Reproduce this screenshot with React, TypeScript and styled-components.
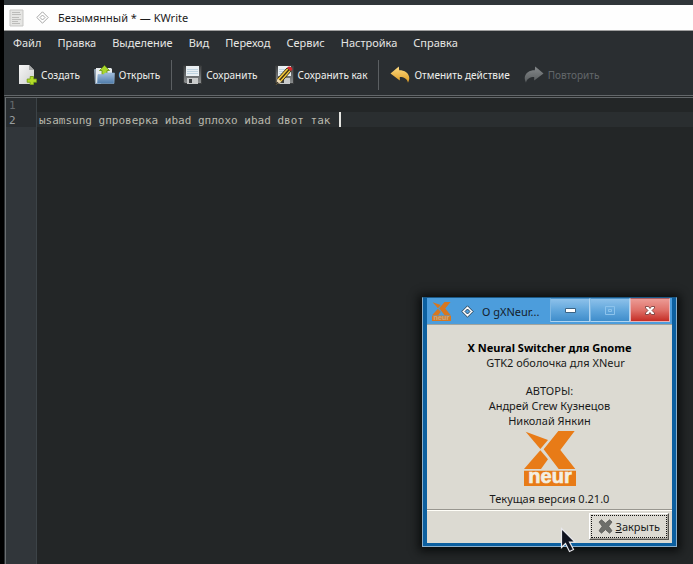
import React, { useState } from "react";
import styled, { createGlobalStyle, css } from "styled-components";

const GlobalStyle = createGlobalStyle`
  *, *::before, *::after { box-sizing: border-box; }
  body {
    margin: 0;
    background: #000;
    font-family: "Noto Sans", sans-serif;
    font-size: 11px;
  }
  button, textarea { font: inherit; color: inherit; }
`;

const Desktop = styled.div`
  position: relative;
  display: flex;
  min-height: 100vh;
  padding: 0 0 0 4px;
  overflow: hidden;
  background: #000;
`;

const AppWindow = styled.main`
  flex: 1;
  min-width: 0;
  display: flex;
  flex-direction: column;
  border-top: 5px solid #30363a;
  background: #2a2e31;
`;

const TitleBar = styled.header`
  display: flex;
  align-items: center;
  height: 26px;
  padding-left: 5px;
  background: #fefefe;
  border-bottom: 1px solid #a0a0a0;
`;

const PinIcon = styled.svg`
  margin: 0 9px 0 12px;
`;

const WindowTitle = styled.h1`
  margin: 0;
  font-size: 11px;
  font-weight: 400;
  color: #1c1c1c;
`;

const MenuBar = styled.nav`
  display: flex;
  gap: 16px;
  height: 22px;
  padding: 0 9px;
`;

const MenuItem = styled.button`
  padding: 0;
  border: 0;
  background: none;
  color: #e6e6e4;
  white-space: nowrap;
`;

const ToolBar = styled.div`
  display: flex;
  align-items: center;
  height: 42px;
  padding: 2px 14px 0;
  font-size: 10px;
  white-space: nowrap;
`;

const ToolButton = styled.button<{ $gap?: number }>`
  display: flex;
  align-items: center;
  gap: 4px;
  margin-right: ${(p) => p.$gap ?? 0}px;
  padding: 0;
  border: 0;
  background: none;
  color: #eeeeec;

  &:disabled { color: #62676a; }
  svg { flex: none; }
`;

const Separator = styled.div`
  width: 1px;
  height: 30px;
  margin-right: 11px;
  background: #5b5f62;
`;

const Editor = styled.section`
  flex: 1;
  display: flex;
  border-top: 3px double #63676a;
  border-left: 1px solid #2a2e31;
  font-family: "DejaVu Sans Mono", monospace;
  font-size: 11px;
  line-height: 15px;
  background: #232627;
`;

const Gutter = styled.div`
  width: 32px;
  padding-left: 3px;
  border-left: 1px solid #6a6e70;
  border-right: 1px solid #3c4347;
  background: linear-gradient(#292d30 29px, #31363a 29px);
`;

const LineNumber = styled.div<{ $current?: boolean }>`
  color: ${(p) => (p.$current ? "#999d9f" : "#64696c")};
`;

const TextPane = styled.div`
  position: relative;
  flex: 1;
  display: flex;
  background: linear-gradient(#232627 14px, #2a2e30 14px, #2a2e30 29px, #232627 29px);
`;

const TextArea = styled.textarea`
  flex: 1;
  padding: 0 2px;
  border: 0;
  outline: 0;
  resize: none;
  background: none;
  color: #b9b8ac;
  line-height: 15px;
  white-space: pre;
  overflow: hidden;
`;

const Caret = styled.span<{ $column: number }>`
  position: absolute;
  top: 14px;
  left: calc(${(p) => p.$column}ch + 4px);
  width: 2px;
  height: 15px;
  background: #e4e4e0;
`;

const Dialog = styled.section`
  position: absolute;
  right: 16px;
  bottom: 17px;
  width: 255px;
  padding: 0 4px 3px;
  border: 1px solid #8aaecb;
  border-top-color: #1b5885;
  background: #0c5f9f;
  box-shadow: 0 1px 9px 3px #090b0b;
`;

const DialogTitleBar = styled.header`
  display: flex;
  align-items: center;
  height: 26px;
  padding: 0 2px 0 5px;
  background: #4c9ddc;
`;

const DialogPin = styled.svg`
  margin: 0 8px 0 10px;
`;

const DialogTitle = styled.h2`
  flex: 1;
  margin: 0;
  font-size: 11px;
  font-weight: 400;
  color: #14202b;
  white-space: nowrap;
`;

const WindowButton = styled.button<{ $close?: boolean }>`
  display: grid;
  place-items: center;
  align-self: flex-start;
  width: 40px;
  height: 24px;
  padding: 0;
  border: 1px solid #b0d4f0;
  border-top-color: #4d92c8;
  border-left: 1px solid #7fb8e3;
  background: linear-gradient(#8dc1ea, #62a7dc 50%, #3f8dcb);
  ${(p) =>
    p.$close &&
    css`
      border-color: #e4b3b8;
      border-top-color: #a95f64;
      background: linear-gradient(#ec9b95, #df7169 50%, #c52d25);
    `}
`;

const DialogBody = styled.div`
  display: flex;
  flex-direction: column;
  border-top: 1px solid #a1a49f;
  background: #dcdad2;
  color: #1a1a1a;
`;

const About = styled.div`
  display: flex;
  flex-direction: column;
  align-items: center;
  padding: 15px 0 3px;
  border-bottom: 1px solid #98968f;
  line-height: 15px;
  text-align: center;

  p { margin: 0; }
`;

const ProgramName = styled.p`
  font-weight: 700;
  color: #000;
`;

const Summary = styled.p`
  padding-left: 12px;
`;

const Authors = styled.div`
  margin: 13px 0 3px;
`;

const Version = styled.p`
  padding-top: 5px;
`;

const Actions = styled.div`
  display: flex;
  justify-content: flex-end;
  padding: 2px 3px 3px;
  border-top: 1px solid #fffef8;
`;

const CloseButton = styled.button`
  padding: 1px;
  border: 1px solid;
  border-color: #fff #55534e #55534e #fff;
  box-shadow: inset -1px -1px #a7a49c;
  background: #dcdad2;
`;

const FocusRing = styled.span`
  display: flex;
  align-items: center;
  gap: 3px;
  height: 23px;
  padding: 0 6px;
  border: 1px dotted #111;
  white-space: nowrap;
`;

const Pointer = styled.svg`
  position: absolute;
  right: 117px;
  bottom: 11px;
`;

function DiamondShape({ line, fill, hole }: { line: string; fill: string; hole: string }) {
  return (
    <g stroke={line}>
      <path d="M6.500.8 12.200 6.500 6.500 12.200.8 6.500Z" fill={fill} />
      <path d="M6.500 4 9 6.500 6.500 9 4 6.500Z" fill={hole} />
    </g>
  );
}

function DocumentIcon() {
  return (
    <svg width="15" height="18" viewBox="0 0 15 18" aria-hidden="true">
      <path d="M1 1h13v16H1Z" fill="#e6e6e4" stroke="#c7c7c5" />
      <path d="M3 3.500h8M3 5.500h9M3 8.500h7M3 10.500h9M3 12.500h6M3 14.500h8" stroke="#bdbdbb" />
    </svg>
  );
}

function NewIcon() {
  return (
    <svg width="19" height="20" viewBox="0 0 19 20" aria-hidden="true">
      <defs>
        <linearGradient id="paper" x2="1" y2="1">
          <stop stopColor="#f6f6f6" />
          <stop offset="1" stopColor="#cfd0d0" />
        </linearGradient>
      </defs>
      <path d="M1 0h10l5 5v14H1Z" fill="url(#paper)" />
      <path d="M11 0v5h5Z" fill="#a9abab" />
      <path d="M12.200 11.500h3.300v2.500h3v3.300h-3v2.500h-3.300v-2.500h-3V14h3Z" fill="#b4dc28" stroke="#6f9a10" strokeWidth=".8" />
    </svg>
  );
}

function OpenIcon() {
  return (
    <svg width="21" height="20" viewBox="0 0 21 20" aria-hidden="true">
      <defs>
        <linearGradient id="folder" x2="0" y2="1">
          <stop stopColor="#a3bedc" />
          <stop offset="1" stopColor="#4f7cab" />
        </linearGradient>
      </defs>
      <path d="M0 5q0-1 1-1h5l1 2v13H1Z" fill="#8fa0b0" />
      <path d="M2 3h15l1 1v6H4v8H2Z" fill="#e8ecee" />
      <path d="M10.500.5 15.500 5.500H13V10H8V5.500H5.500Z" fill="#a9d62c" stroke="#66900f" strokeWidth=".8" />
      <path d="M4 9.500h6l1-1.500h9.500l-.5 10.500H3Z" fill="url(#folder)" stroke="#8fb1d4" strokeWidth=".6" />
    </svg>
  );
}

function SaveIcon({ pencil = false }: { pencil?: boolean }) {
  return (
    <svg width="19" height="20" viewBox="0 0 19 20" aria-hidden="true">
      <defs>
        <linearGradient id="disk" x2="0" y2="1">
          <stop stopColor="#3e4143" />
          <stop offset=".5" stopColor="#66696a" />
          <stop offset="1" stopColor="#8c8f90" />
        </linearGradient>
      </defs>
      <path d="M.5 1h18v17.500H2L.5 17Z" fill="url(#disk)" stroke="#3a3c3d" />
      <path d="M3 1h13v10H3Z" fill="#e9eff2" />
      <path d="M4 4.500h11M4 6.500h11M4 8.500h11" stroke="#bfd3df" />
      <path d="M4 13h11v6H4Z" fill="#c9cbcb" />
      <path d="M6 14h3v4H6Z" fill="#3b3e40" />
      {pencil && (
        <g>
          <path d="m.8 19.400 1.800-6L12 3l4 3-9.500 11Z" fill="#f0c53a" stroke="#2e2610" strokeWidth=".9" />
          <path d="m4.600 15.300 9.600-10.800" stroke="#3a2f14" strokeWidth="1.300" />
          <path d="m12 3 1-1.200q2-1 3.600.8t.4 2.400L16 6Z" fill="#d8262c" />
          <path d="m.8 19.400 1.800-6 3.900 3.600Z" fill="#ecd9b4" />
          <path d="m.8 19.400.9-3 2 1.700Z" fill="#222" />
        </g>
      )}
    </svg>
  );
}

function ArrowIcon({ redo = false }: { redo?: boolean }) {
  const id = redo ? "redo" : "undo";
  return (
    <svg width="20" height="18" viewBox="0 0 20 18" aria-hidden="true">
      <defs>
        <linearGradient id={id} x2="0" y2="1">
          <stop stopColor={redo ? "#85898b" : "#ffdc84"} />
          <stop offset="1" stopColor={redo ? "#575b5d" : "#dc9a20"} />
        </linearGradient>
      </defs>
      <path
        transform={redo ? "matrix(-1 0 0 1 20 0)" : undefined}
        d="M.5 7.500 8.800.5 9.200 4.200C14.500 4.200 19 6.800 19.300 12q0 2.500-1.300 4.800C17.500 13 14 11 9.800 11V14.500Z"
        fill={`url(#${id})`}
      />
    </svg>
  );
}

function XNeurLogo({ width, height, color, lettering }: { width: number; height: number; color: string; lettering: string }) {
  return (
    <svg width={width} height={height} viewBox="0 0 156 165" preserveAspectRatio="none" role="img" aria-label="XNeur">
      <g fill={color}>
        <path d="M5 2 72 27 49 54Z" />
        <path d="M103 0h49l-43 57 45 57h-50L59 55Z" />
        <path d="m49 58 23 27-21 29H0Z" />
        <path d="M0 119h156v46H0Z" />
      </g>
      <text
        x="78"
        y="157"
        textAnchor="middle"
        fill={lettering}
        stroke={lettering}
        strokeWidth="2"
        fontFamily="Liberation Sans, sans-serif"
        fontWeight="700"
        fontSize="60"
      >
        neur
      </text>
    </svg>
  );
}

function CrossIcon() {
  return (
    <svg width="15" height="15" viewBox="0 0 15 15" aria-hidden="true">
      <path
        d="M1 3 3.500.8 7.500 4.200 11.500.8 14 3 10.700 7.300 14 11.800 11.500 14.200 7.500 10.600 3.500 14.200 1 11.800 4.200 7.300Z"
        fill="#6d6e6a"
        stroke="#5a5b58"
        strokeWidth=".8"
      />
    </svg>
  );
}

const menus = ["Файл", "Правка", "Выделение", "Вид", "Переход", "Сервис", "Настройка", "Справка"];
const initialText = "\nыsamsung gпроверка иbad gплохо иbad dвот так ";

export default function App() {
  const [text, setText] = useState(initialText);
  const lines = text.split("\n");

  return (
    <Desktop>
      <GlobalStyle />
      <AppWindow>
        <TitleBar>
          <DocumentIcon />
          <PinIcon width="13" height="13" viewBox="0 0 13 13" aria-hidden="true">
            <DiamondShape line="#a6a6a6" fill="#fff" hole="#fff" />
          </PinIcon>
          <WindowTitle>Безымянный * — KWrite</WindowTitle>
        </TitleBar>
        <MenuBar aria-label="Меню">
          {menus.map((name) => (
            <MenuItem key={name}>{name}</MenuItem>
          ))}
        </MenuBar>
        <ToolBar>
          <ToolButton $gap={14}><NewIcon />Создать</ToolButton>
          <ToolButton $gap={11}><OpenIcon />Открыть</ToolButton>
          <Separator />
          <ToolButton $gap={17}><SaveIcon />Сохранить</ToolButton>
          <ToolButton $gap={11}><SaveIcon pencil />Сохранить как</ToolButton>
          <Separator />
          <ToolButton $gap={14}><ArrowIcon />Отменить действие</ToolButton>
          <ToolButton disabled><ArrowIcon redo />Повторить</ToolButton>
        </ToolBar>
        <Editor>
          <Gutter>
            {lines.map((_, i) => (
              <LineNumber key={i} $current={i === lines.length - 1}>{i + 1}</LineNumber>
            ))}
          </Gutter>
          <TextPane>
            <TextArea aria-label="Текст документа" spellCheck={false} value={text} onChange={(e) => setText(e.target.value)} />
            <Caret $column={lines[lines.length - 1].length} />
          </TextPane>
        </Editor>
      </AppWindow>

      <Dialog role="dialog" aria-label="О gXNeur">
        <DialogTitleBar>
          <XNeurLogo width={19} height={19} color="#d8771f" lettering="#c9a57c" />
          <DialogPin width="13" height="13" viewBox="0 0 13 13" aria-hidden="true">
            <DiamondShape line="#28435a" fill="#fff" hole="#4c9ddc" />
          </DialogPin>
          <DialogTitle>О gXNeur...</DialogTitle>
          <WindowButton aria-label="Свернуть">
            <svg width="11" height="5" viewBox="0 0 11 5"><path d="M.5.500h10v4H.5Z" fill="#fff" stroke="#3b6485" /></svg>
          </WindowButton>
          <WindowButton aria-label="Развернуть" disabled>
            <svg width="10" height="9" viewBox="0 0 10 9"><path d="M.5.500h9v8h-9ZM3.500 3.500h3v2h-3Z" fill="none" stroke="#8cc3ec" /></svg>
          </WindowButton>
          <WindowButton aria-label="Закрыть окно" $close>
            <svg width="10" height="9" viewBox="0 0 10 9">
              <path d="M.5.500h3L5 2.500 6.500.500h3v1.500L7 4.500l2.500 2.500v1.500h-3L5 6.500 3.500 8.500h-3V7L3 4.500.5 2Z" fill="#fff" stroke="#6c3431" strokeWidth=".8" />
            </svg>
          </WindowButton>
        </DialogTitleBar>
        <DialogBody>
          <About>
            <ProgramName>X Neural Switcher для Gnome</ProgramName>
            <Summary>GTK2 оболочка для XNeur</Summary>
            <Authors>
              <p>АВТОРЫ:</p>
              <p>Андрей Crew Кузнецов</p>
              <p>Николай Янкин</p>
            </Authors>
            <XNeurLogo width={52} height={55} color="#e87b17" lettering="#f3eee2" />
            <Version>Текущая версия 0.21.0</Version>
          </About>
          <Actions>
            <CloseButton>
              <FocusRing><CrossIcon /><span><u>З</u>акрыть</span></FocusRing>
            </CloseButton>
          </Actions>
        </DialogBody>
      </Dialog>

      <Pointer width="16" height="26" viewBox="0 0 16 26" aria-hidden="true">
        <path d="M1.500 1.500v19l4-4 4 8 4-2-4-7.500h5.500Z" fill="#10131f" stroke="#e8e8ec" strokeWidth="1.200" />
      </Pointer>
    </Desktop>
  );
}
